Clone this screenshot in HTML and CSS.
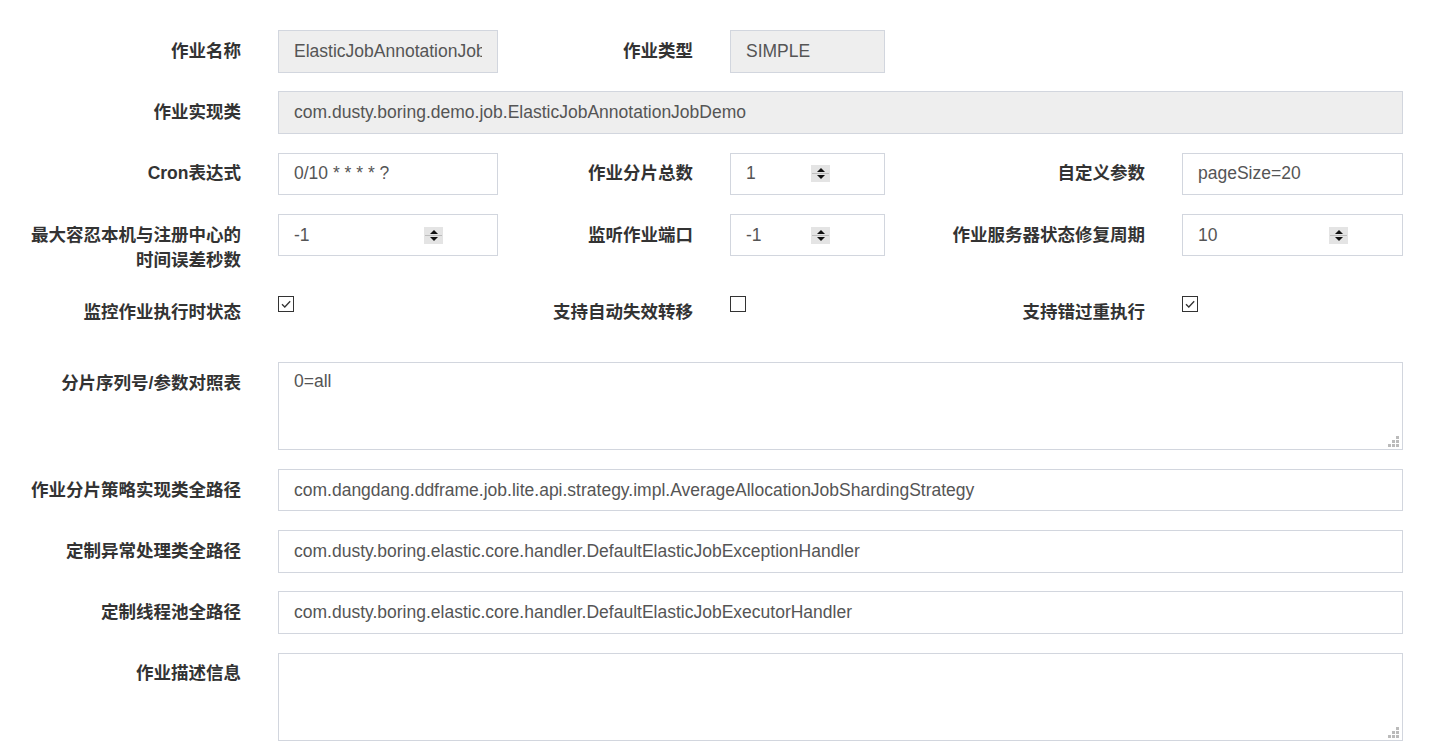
FILE: index.html
```html
<!DOCTYPE html>
<html lang="zh">
<head>
<meta charset="utf-8">
<title>作业配置</title>
<link rel="stylesheet" href="styles.css">
</head>
<body>
<form class="form">
  <div class="row">
    <label class="lbl">作业名称</label>
    <input class="ctl ro" type="text" value="ElasticJobAnnotationJobDemo" readonly>
    <label class="lbl">作业类型</label>
    <input class="ctl ro" type="text" value="SIMPLE" readonly>
  </div>
  <div class="row">
    <label class="lbl">作业实现类</label>
    <input class="ctl ro wide" type="text" value="com.dusty.boring.demo.job.ElasticJobAnnotationJobDemo" readonly>
  </div>
  <div class="row">
    <label class="lbl">Cron表达式</label>
    <input class="ctl" type="text" value="0/10 * * * * ?">
    <label class="lbl">作业分片总数</label>
    <div class="ctl num"><span class="val">1</span><span class="spin"><i class="up"></i><i class="dn"></i></span></div>
    <label class="lbl">自定义参数</label>
    <input class="ctl" type="text" value="pageSize=20">
  </div>
  <div class="row">
    <label class="lbl">最大容忍本机与注册中心的时间误差秒数</label>
    <div class="ctl num"><span class="val">-1</span><span class="spin"><i class="up"></i><i class="dn"></i></span></div>
    <label class="lbl">监听作业端口</label>
    <div class="ctl num"><span class="val">-1</span><span class="spin"><i class="up"></i><i class="dn"></i></span></div>
    <label class="lbl">作业服务器状态修复周期</label>
    <div class="ctl num"><span class="val">10</span><span class="spin"><i class="up"></i><i class="dn"></i></span></div>
  </div>
  <div class="row chkrow">
    <label class="lbl">监控作业执行时状态</label>
    <div class="chkcell"><span class="chk on"><svg viewBox="0 0 14 14" width="14" height="14"><path d="M3 7.2 L5.8 10 L11.2 4.2" fill="none" stroke="#333" stroke-width="1.3"/></svg></span></div>
    <label class="lbl">支持自动失效转移</label>
    <div class="chkcell"><span class="chk"></span></div>
    <label class="lbl">支持错过重执行</label>
    <div class="chkcell"><span class="chk on"><svg viewBox="0 0 14 14" width="14" height="14"><path d="M3 7.2 L5.8 10 L11.2 4.2" fill="none" stroke="#333" stroke-width="1.3"/></svg></span></div>
  </div>
  <div class="row">
    <label class="lbl">分片序列号/参数对照表</label>
    <div class="tawrap wide"><textarea class="ta">0=all</textarea><span class="grip"></span></div>
  </div>
  <div class="row">
    <label class="lbl">作业分片策略实现类全路径</label>
    <input class="ctl wide" type="text" value="com.dangdang.ddframe.job.lite.api.strategy.impl.AverageAllocationJobShardingStrategy">
  </div>
  <div class="row">
    <label class="lbl">定制异常处理类全路径</label>
    <input class="ctl wide" type="text" value="com.dusty.boring.elastic.core.handler.DefaultElasticJobExceptionHandler">
  </div>
  <div class="row">
    <label class="lbl">定制线程池全路径</label>
    <input class="ctl wide" type="text" value="com.dusty.boring.elastic.core.handler.DefaultElasticJobExecutorHandler">
  </div>
  <div class="row">
    <label class="lbl">作业描述信息</label>
    <div class="tawrap wide"><textarea class="ta"></textarea><span class="grip"></span></div>
  </div>
</form>
</body>
</html>
```

FILE: styles.css
```css
html, body {
  margin: 0;
  padding: 0;
  background: #fff;
}
body {
  font-family: "Liberation Sans", Arial, "Noto Sans CJK SC", sans-serif;
  font-size: 17.5px;
  color: #333;
  overflow: hidden;
}
.form {
  padding-top: 30px;
}
.row {
  display: grid;
  grid-template-columns: 241px 220px 158px 155px 223px 221px;
  column-gap: 37px;
  align-items: start;
  margin-bottom: 18.75px;
}
.lbl {
  text-align: right;
  font-weight: bold;
  line-height: 25px;
  padding-top: 8.75px;
  white-space: nowrap;
  color: #333;
  font-family: "Liberation Sans", Arial, "Noto Sans CJK SC", sans-serif;
}
.row > .lbl:first-child {
  white-space: normal;
  padding-left: 20px;
}
.ctl {
  box-sizing: border-box;
  height: 42.5px;
  width: 100%;
  margin: 0;
  border: 1px solid #d2d6de;
  border-radius: 0;
  padding: 0 15px;
  font-family: "Liberation Sans", Arial, sans-serif;
  font-size: 17.5px;
  color: #555;
  background: #fff;
  outline: none;
}
.ro {
  background: #eee;
}
.wide {
  grid-column: 2 / 7;
}
.num {
  display: flex;
  align-items: center;
  padding-right: 54px;
}
.val {
  flex: 1;
}
.spin {
  width: 19px;
  height: 17px;
  background: #e4e4e4;
  display: flex;
  flex-direction: column;
  align-items: center;
  justify-content: space-between;
  position: relative;
  box-sizing: border-box;
  padding: 3px 0;
}
.spin::after {
  content: "";
  position: absolute;
  left: 1px;
  right: 1px;
  top: 8px;
  height: 1px;
  background: #bdbdbd;
}
.spin i {
  display: block;
  width: 0;
  height: 0;
  border-left: 4px solid transparent;
  border-right: 4px solid transparent;
}
.spin .up {
  border-bottom: 4px solid #111;
}
.spin .dn {
  border-top: 4px solid #111;
}
.chkrow {
  min-height: 52px;
}
.chkcell {
  padding-top: 5px;
}
.chk {
  display: block;
  box-sizing: border-box;
  width: 16px;
  height: 16px;
  border: 1.5px solid #333;
  background: #fff;
}
.chk svg {
  display: block;
  margin: -0.5px 0 0 -0.5px;
}
.tawrap {
  position: relative;
}
.ta {
  display: block;
  box-sizing: border-box;
  width: 100%;
  height: 88px;
  margin: 0;
  border: 1px solid #d2d6de;
  border-radius: 0;
  padding: 6px 15px;
  font-family: "Liberation Sans", Arial, sans-serif;
  font-size: 17.5px;
  line-height: 25px;
  color: #555;
  resize: none;
  outline: none;
}
.grip {
  position: absolute;
  right: 4px;
  bottom: 3px;
  width: 11px;
  height: 11px;
  background:
    linear-gradient(#bbb, #bbb) 8px 0 / 3px 3px no-repeat,
    linear-gradient(#bbb, #bbb) 4px 4px / 3px 3px no-repeat,
    linear-gradient(#bbb, #bbb) 8px 4px / 3px 3px no-repeat,
    linear-gradient(#bbb, #bbb) 0 8px / 3px 3px no-repeat,
    linear-gradient(#bbb, #bbb) 4px 8px / 3px 3px no-repeat,
    linear-gradient(#bbb, #bbb) 8px 8px / 3px 3px no-repeat;
}
```
